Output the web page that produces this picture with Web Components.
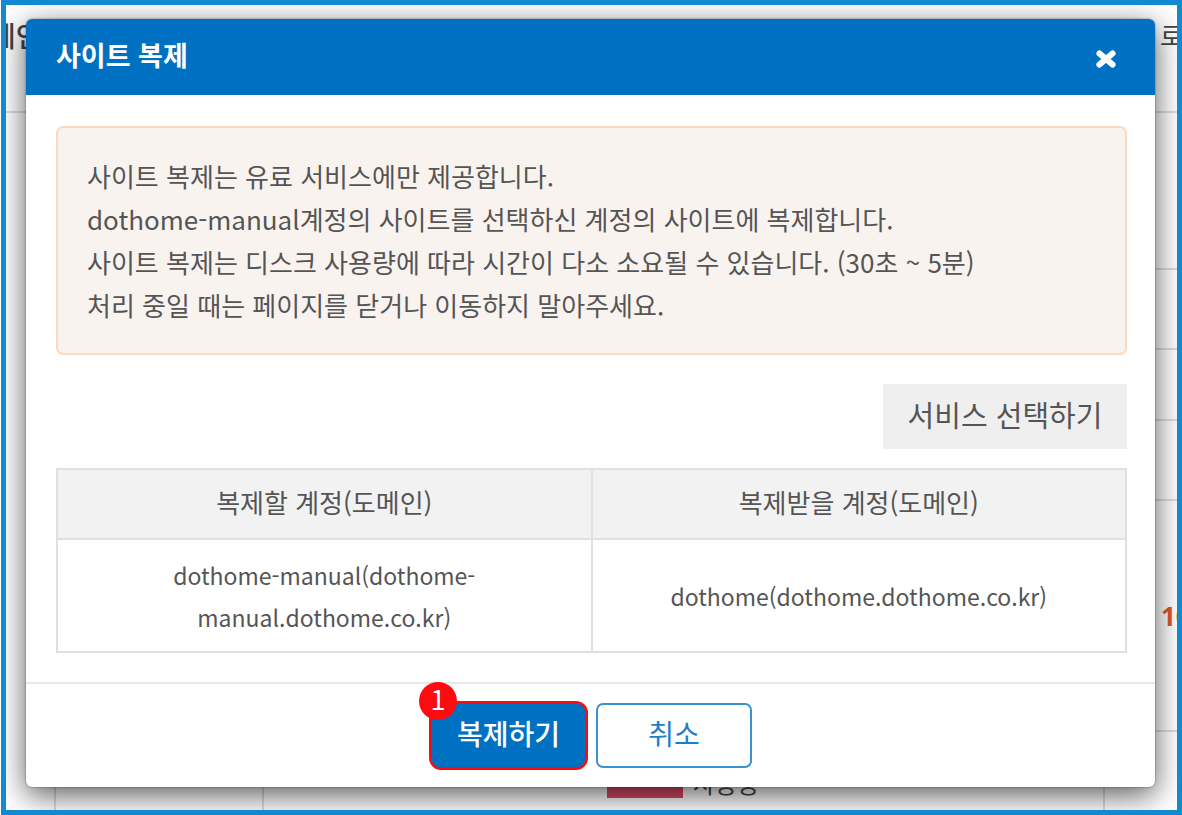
<!DOCTYPE html>
<html lang="ko">
<head>
<meta charset="utf-8">
<meta name="viewport" content="width=device-width, initial-scale=1">
<title>사이트 복제</title>
<style>
  body { margin: 0; font-family: "Noto Sans CJK KR", "Noto Sans", sans-serif; font-size: 26px; color: #555; background: #fff; }
</style>
</head>
<body>
<manual-frame>
  <account-page slot="page"></account-page>
  <clone-dialog>
    <span slot="title">사이트 복제</span>
    <notice-box>
      <p>사이트 복제는 유료 서비스에만 제공합니다.</p>
      <p>dothome-manual계정의 사이트를 선택하신 계정의 사이트에 복제합니다.</p>
      <p>사이트 복제는 디스크 사용량에 따라 시간이 다소 소요될 수 있습니다. (30초 ~ 5분)</p>
      <p>처리 중일 때는 페이지를 닫거나 이동하지 말아주세요.</p>
    </notice-box>
    <action-button kind="plain">서비스 선택하기</action-button>
    <account-table></account-table>
    <step-marker slot="actions" number="1"><action-button kind="primary">복제하기</action-button></step-marker>
    <action-button slot="actions" kind="outline">취소</action-button>
  </clone-dialog>
</manual-frame>

<script>
class Base extends HTMLElement {
  constructor() {
    super();
    this.attachShadow({ mode: "open" }).innerHTML = this.constructor.markup;
  }
}

class ManualFrame extends Base {
  static markup = `
    <style>
      :host { display: grid; box-sizing: border-box; min-height: 100vh; margin-left: 1px; border: 5px solid #1389d2; overflow: hidden; }
      .page, .modal { grid-area: 1 / 1; min-width: 0; }
      .page { display: grid; }
      .modal { z-index: 1; padding: 14px 22px 23px 20px; }
    </style>
    <div class="page"><slot name="page"></slot></div>
    <div class="modal"><slot></slot></div>`;
}

class AccountPage extends Base {
  static markup = `
    <style>
      :host { display: flex; flex-direction: column; min-width: 0; overflow: hidden; color: #444; }
      header { display: flex; justify-content: space-between; height: 108px; box-sizing: border-box; border-bottom: 2px solid #ddd; }
      header span { line-height: 40px; white-space: nowrap; padding-top: 10px; }
      .domain { font-weight: 500; font-size: 28px; margin-left: -16px; }
      .side { width: 17px; overflow: hidden; }
      .body { flex: 1; display: flex; }
      .main { flex: 1; display: flex; flex-direction: column; justify-content: flex-end; }
      .last { height: 79px; display: grid; grid-template-columns: 206px 1fr; margin-left: 48px; border-left: 2px solid #ddd; }
      .status { border-left: 2px solid #ddd; display: flex; align-items: flex-end; gap: 10px; padding: 0 0 12px 343px; font-size: 24px; line-height: 30px; }
      .tag { width: 76px; height: 40px; background: #dc4a69; }
      .rows { width: 74px; display: grid; grid-template-rows: 157px 80px 71px 80px 231px 1fr; }
      .rows div { border-bottom: 2px solid #ddd; }
      .rows div:last-child { border-bottom: 0; border-left: 2px solid #ddd; }
      .rows .usage { color: #e0562a; font: bold 26px/40px "Open Sans", sans-serif; padding: 95px 0 0 58px; overflow: hidden; }
    </style>
    <header><span class="domain">메인</span><span class="side">로</span></header>
    <div class="body">
      <div class="main"><div class="last"><div></div><div class="status"><i class="tag"></i><span>사용중</span></div></div></div>
      <div class="rows"><div></div><div></div><div></div><div></div><div class="usage">100</div><div></div></div>
    </div>`;
}

class CloneDialog extends Base {
  static markup = `
    <style>
      :host { display: block; }
      section { background: #fff; border-radius: 6px; box-shadow: 0 8px 30px rgba(0,0,0,.65), 0 0 2px rgba(0,0,0,.5); }
      header { display: flex; align-items: center; justify-content: space-between; height: 76px; padding: 0 37px 0 30px; background: #0071c2; color: #fff; border-radius: 6px 6px 0 0; }
      h1 { margin: 0; padding-bottom: 4px; font-size: 27px; line-height: 40px; font-weight: 700; }
      .close { display: flex; padding: 4px 0 0; border: 0; background: none; cursor: pointer; }
      .content { display: flex; flex-direction: column; align-items: flex-end; padding: 31px 28px 29px 30px; }
      footer { display: flex; justify-content: center; align-items: center; gap: 8px; border-top: 2px solid #e9e9e9; padding: 17px 0; }
      ::slotted(notice-box), ::slotted(account-table) { align-self: stretch; }
      ::slotted(action-button[kind="plain"]) { margin: 29px 0 19px; }
    </style>
    <section role="dialog" aria-labelledby="t">
      <header><h1 id="t"><slot name="title"></slot></h1>
        <button class="close" type="button" aria-label="닫기">
          <svg width="24" height="20" viewBox="0 0 24 20"><path d="M5.500 4.500 18.500 15.500M18.500 4.500 5.500 15.500" fill="none" stroke="#fff" stroke-width="6.200" stroke-linecap="round"/></svg>
        </button>
      </header>
      <div class="content"><slot></slot></div>
      <footer><slot name="actions"></slot></footer>
    </section>`;
}

class NoticeBox extends Base {
  static markup = `
    <style>
      :host { display: block; border: 2px solid #fdd9bd; border-radius: 7px; background: #f9f3ef; padding: 26px 29px 27px; }
      ::slotted(p) { margin: 0; line-height: 43px; }
    </style>
    <slot></slot>`;
}

class ActionButton extends Base {
  static markup = `
    <style>
      :host { display: block; }
      button { display: block; box-sizing: border-box; width: 156px; height: 65px; padding: 0 0 6px; border: 0; border-radius: 7px; font: inherit; font-size: 28px; line-height: 40px; cursor: pointer; }
      :host([kind="plain"]) button { width: 244px; border-radius: 0; background: #efefef; color: #555; font-size: 29px; }
      :host([kind="primary"]) button { width: 153px; height: 63px; border-radius: 8px; background: #0071c2; color: #fff; font-weight: 500; }
      :host([kind="outline"]) button { border: 2px solid #3b92d2; background: #fff; color: #1a7fc8; }
    </style>
    <button type="button"><slot></slot></button>`;
}

class StepMarker extends Base {
  static markup = `
    <style>
      :host { display: block; position: relative; border: 3px solid #ff0a0f; border-radius: 12px; background: #0071c2; }
      b { position: absolute; left: -13px; top: -22px; width: 38px; height: 38px; border-radius: 50%; background: #ff0a0f; color: #fff; font-size: 27px; font-weight: 400; line-height: 34px; text-align: center; }
    </style>
    <slot></slot><b></b>`;
  connectedCallback() { this.shadowRoot.querySelector("b").textContent = this.getAttribute("number"); }
}

class AccountTable extends Base {
  static markup = `
    <style>
      :host { display: block; }
      table { width: 100%; table-layout: fixed; border-collapse: collapse; text-align: center; }
      th, td { border: 2px solid #e0e0e0; line-height: 42px; }
      th { background: #f2f2f2; font-weight: 400; padding: 11px 29px 15px; }
      td { padding: 14px 29px 13px; font-size: 23px; }
    </style>
    <table>
      <thead><tr><th scope="col">복제할 계정(도메인)</th><th scope="col">복제받을 계정(도메인)</th></tr></thead>
      <tbody><tr><td>dothome-manual(dothome-<wbr>manual.dothome.co.kr)</td><td>dothome(dothome.dothome.co.kr)</td></tr></tbody>
    </table>`;
}

customElements.define("manual-frame", ManualFrame);
customElements.define("account-page", AccountPage);
customElements.define("clone-dialog", CloneDialog);
customElements.define("notice-box", NoticeBox);
customElements.define("action-button", ActionButton);
customElements.define("step-marker", StepMarker);
customElements.define("account-table", AccountTable);
</script>
</body>
</html>
